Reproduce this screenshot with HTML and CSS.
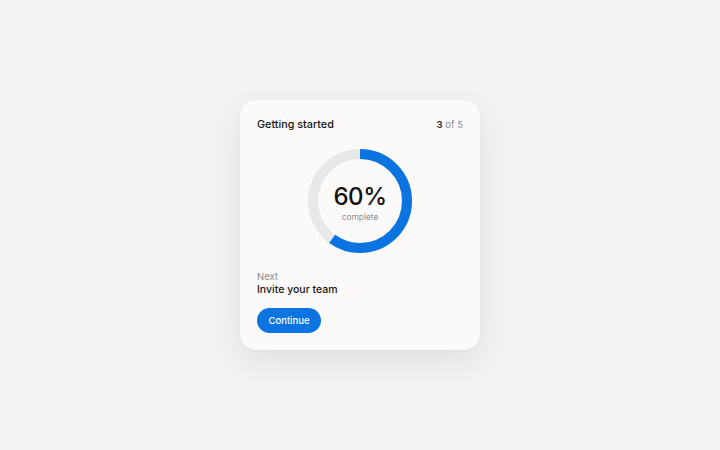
FILE: index.html
```html
<!DOCTYPE html>
<html>
<head>
<meta charset="utf-8">
<link rel="stylesheet" href="styles.css">
</head>
<body>
<div class="stage">
  <div class="card">
    <div class="header">
      <span class="title">Getting started</span>
      <span class="step"><b>3</b> of 5</span>
    </div>
    <div class="ring-wrap">
      <svg class="ring" width="104" height="104" viewBox="0 0 104 104">
        <circle cx="52" cy="52" r="47" fill="none" stroke="#e8e8e6" stroke-width="10"/>
        <circle cx="52" cy="52" r="47" fill="none" stroke="#0b74e0" stroke-width="10"
          stroke-dasharray="177.19 295.31" transform="rotate(-90 52 52)"/>
      </svg>
      <div class="ring-label">
        <div class="pct">60%</div>
        <div class="sub">complete</div>
      </div>
    </div>
    <div class="next">
      <div class="next-label">Next</div>
      <div class="next-task">Invite your team</div>
    </div>
    <button class="btn">Continue</button>
  </div>
</div>
</body>
</html>
```
FILE: styles.css
```css
html, body {
  margin: 0;
  padding: 0;
  height: 100%;
}
body {
  background: #f3f2f0;
  font-family: Inter, "Noto Sans", sans-serif;
}
.stage {
  height: 100%;
  display: flex;
  align-items: center;
  justify-content: center;
}
.card {
  width: 240px;
  height: 250px;
  box-sizing: border-box;
  padding: 16px 16px 16px 17px;
  background: #fbfaf9;
  border-radius: 16px;
  box-shadow: 0 10px 30px rgba(0,0,0,0.07), 0 1px 3px rgba(0,0,0,0.03);
  display: flex;
  flex-direction: column;
}
.header {
  display: flex;
  justify-content: space-between;
  align-items: center;
  height: 16px;
}
.title {
  font-size: 10.8px;
  font-weight: 500;
  color: #141414;
}
.step {
  font-size: 9.5px;
  color: #8a8a8a;
  margin-right: 1px;
}
.step b {
  color: #1a1a1a;
  font-weight: 600;
}
.ring-wrap {
  position: relative;
  width: 104px;
  height: 104px;
  margin: 17px auto 0;
  left: -0.5px;
}
.ring {
  display: block;
}
.ring-label {
  position: absolute;
  inset: 0;
  padding-top: 4px;
  display: flex;
  flex-direction: column;
  align-items: center;
  justify-content: center;
}
.pct {
  font-size: 24px;
  font-weight: 500;
  color: #111;
  line-height: 28px;
  letter-spacing: -0.4px;
}
.sub {
  font-size: 8.4px;
  color: #909090;
  line-height: 12px;
}
.next {
  margin-top: 17px;
}
.next-label {
  font-size: 9.5px;
  color: #8a8a8a;
  line-height: 13px;
}
.next-task {
  font-size: 10.5px;
  font-weight: 500;
  color: #141414;
  line-height: 14px;
}
.btn {
  margin-top: 11px;
  align-self: flex-start;
  height: 25px;
  width: 64px;
  border: none;
  border-radius: 13px;
  background: #0b74e0;
  color: #fff;
  font-family: inherit;
  font-size: 9.5px;
  font-weight: 500;
  padding: 0;
}
```
